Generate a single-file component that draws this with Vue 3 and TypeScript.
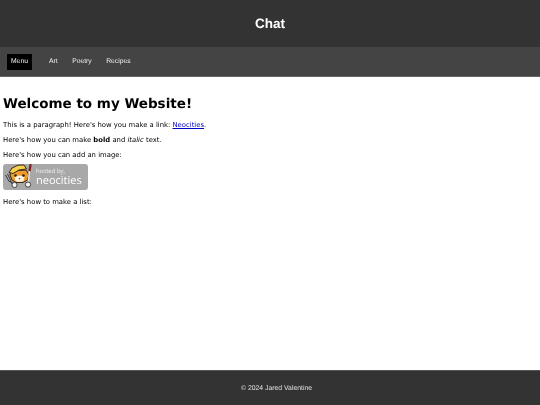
<script setup lang="ts">
const links: string[] = ['Art', 'Poetry', 'Recipes']
</script>

<template>
  <div class="page">
    <header class="top"><h1>Chat</h1></header>
    <nav class="nav">
      <a class="item active">Menu</a>
      <a v-for="l in links" :key="l" class="item">{{ l }}</a>
    </nav>
    <main class="main">
      <h2>Welcome to my Website!</h2>
      <p class="first">This is a paragraph! Here's how you make a link: <a class="link">Neocities</a>.</p>
      <p>Here's how you can make <strong>bold</strong> and <em>italic</em> text.</p>
      <p>Here's how you can add an image:</p>
      <div class="badge">
        <svg class="cat" viewBox="0 0 34 26" width="34" height="26">
          <path d="M2.5 11 L6.5 18 M4.5 10 L8 17 M7 10 L9.5 16" stroke="#3c3c3c" stroke-width="1" fill="none"/>
          <path d="M7 17 L11 21" stroke="#3c3c3c" stroke-width="1.4"/>
          <path d="M8 7 L23 6 L26 11 L24.5 16 L20 18.5 L13 18.5 L9 16 L7 11 Z" fill="#ef9a2c" stroke="#3a2a14" stroke-width="1"/>
          <path d="M6 8.5 L9 4 L15 1.2 L21 1 L23.5 5 L16 6 L10 9.5 Z" fill="#f5cf4e" stroke="#3a2a14" stroke-width="1"/>
          <path d="M11.5 13 Q16 10 21.5 13 L20.5 17 Q16 19 12.5 17 Z" fill="#fff3df"/>
          <circle cx="12.5" cy="11.5" r="1.2" fill="#1e1e1e"/>
          <circle cx="20.5" cy="11.5" r="1.2" fill="#1e1e1e"/>
          <path d="M15.5 14 L17.5 14 L16.5 15.5 Z" fill="#6a2a12"/>
          <circle cx="11.5" cy="21" r="2.6" fill="#f8f5ec" stroke="#333" stroke-width="0.9"/>
          <path d="M27.5 1 L26.5 7" stroke="#7a2020" stroke-width="2.2" stroke-linecap="round"/>
          <path d="M26.5 7 L25.4 18" stroke="#e9e4d8" stroke-width="1.6"/>
          <circle cx="25" cy="20.6" r="2.6" fill="#f8f5ec" stroke="#333" stroke-width="0.9"/>
        </svg>
        <div class="words">
          <span class="hosted">hosted by,</span>
          <span class="neo">neocities</span>
        </div>
      </div>
      <p class="after">Here's how to make a list:</p>
    </main>
    <footer class="foot"><span class="foot-text">© 2024 Jared Valentine</span></footer>
  </div>
</template>

<style>
html, body { margin: 0; padding: 0; background: #fff; }
</style>

<style scoped>
.page {
  width: 540px;
  height: 405px;
  display: flex;
  flex-direction: column;
  overflow: hidden;
  font-family: "DejaVu Sans", sans-serif;
  font-size: 6.85px;
  color: #000;
  text-rendering: geometricPrecision;
}
.top {
  height: 47px;
  flex: none;
  background: #333;
  display: flex;
  align-items: center;
  justify-content: center;
}
.top h1 {
  margin: 0 0 1px;
  font: bold 13.5px "Liberation Sans", sans-serif;
  color: #fff;
  filter: blur(0.3px);
}
.nav {
  height: 29px;
  flex: none;
  background: #444;
  border-bottom: 1px solid #666;
  display: flex;
  align-items: center;
  padding-left: 7px;
  font-family: "Liberation Sans", sans-serif;
  font-size: 6.75px;
  color: #efefef;
}
.item { margin-right: 14.5px; line-height: 16px; filter: blur(0.3px); }
.item.active { background: #000; width: 17px; padding: 0 4px; margin-right: 17px; }
.main { flex: 1; padding: 0 3px; }
h2 {
  margin: 18px 0 0;
  font: bold 13.5px/19px "DejaVu Sans", sans-serif;
  color: #000;
  filter: blur(0.3px);
}
p { margin: 6px 0 0; line-height: 9px; white-space: nowrap; filter: blur(0.3px); }
p.first { margin-top: 7px; }
.link { color: #0000c8; text-decoration: underline; }
.badge {
  margin-top: 4px;
  width: 85px;
  height: 26px;
  border-radius: 3px;
  background: #a8a8a8;
  display: flex;
  align-items: center;
  filter: blur(0.3px);
}
.cat { flex: none; }
.words {
  display: flex;
  flex-direction: column;
  color: #fff;
  font-family: "Open Sans", sans-serif;
  margin-left: -1px;
}
.hosted { font-size: 6px; line-height: 7px; color: #eee; font-weight: 400; }
.neo { font-size: 11px; line-height: 11px; font-weight: 400; }
.after { margin-top: 8px; }
.foot {
  height: 34px;
  flex: none;
  background: #333;
  border-top: 1px solid #555;
  display: flex;
  align-items: center;
  justify-content: center;
  padding-left: 13px;
  font-family: "Liberation Sans", sans-serif;
  font-size: 6.85px;
  color: #e0e0e0;
}
.foot-text { filter: blur(0.3px); }
</style>
